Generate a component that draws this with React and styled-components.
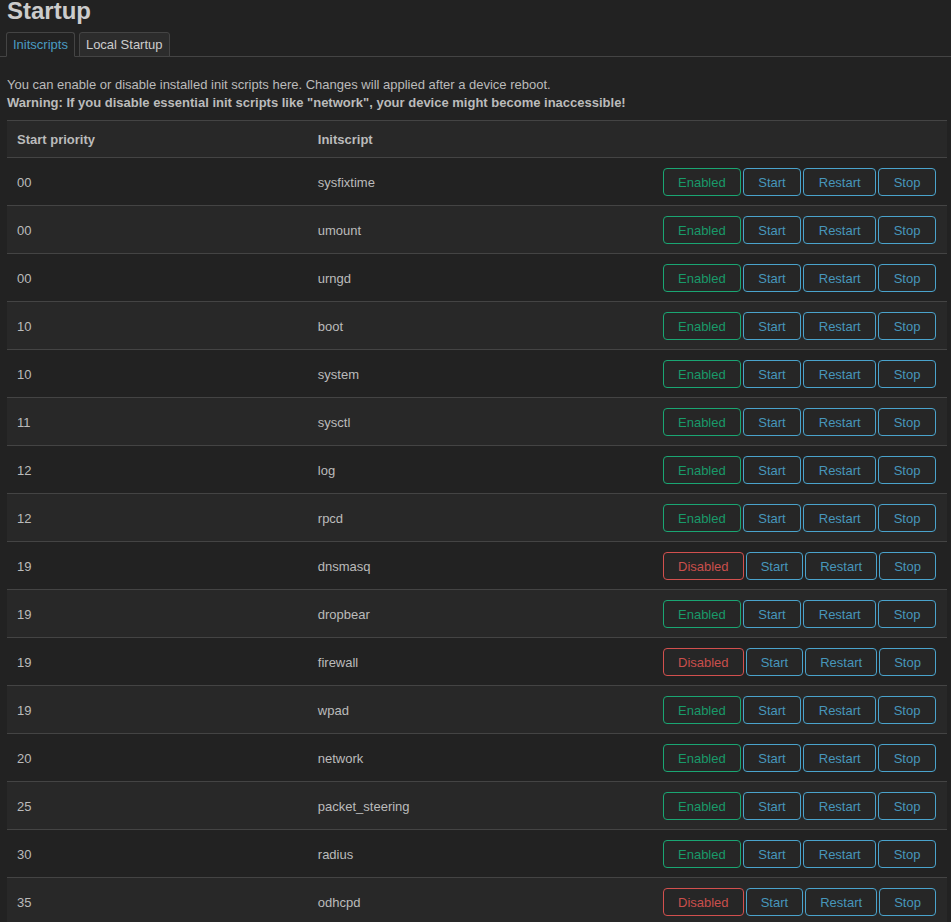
import React from "react";
import styled, { createGlobalStyle } from "styled-components";

const Global = createGlobalStyle`
  html, body { margin: 0; padding: 0; background: #222222; }
  body {
    font-family: "Liberation Sans", Arial, sans-serif;
    font-size: 13px;
    color: #bbbbbb;
    overflow: hidden;
  }
`;

const Page = styled.div`
  padding: 0 4px 0 7px;
  width: 940px;
  box-sizing: content-box;
`;

const Title = styled.h2`
  margin: -3px 0 0 0;
  font-size: 24px;
  font-weight: bold;
  line-height: 27px;
  color: #cccccc;
`;

const Tabs = styled.ul`
  display: flex;
  gap: 4px;
  list-style: none;
  margin: 8px -4px 0 -7px;
  padding: 0 0 0 6px;
  border-bottom: 1px solid #444444;
`;

const Tab = styled.li`
  margin-bottom: -1px;
  padding: 0 6px;
  line-height: 23px;
  border: 1px solid #444444;
  border-bottom-color: ${(p) => (p.$active ? "#222222" : "#444444")};
  border-radius: 3px 3px 0 0;
  background: ${(p) => (p.$active ? "#222222" : "#2c2c2c")};
  color: ${(p) => (p.$active ? "#4a9cc2" : "#cccccc")};
`;

const Desc = styled.div`
  margin-top: 19px;
  line-height: 18px;
`;

const Warn = styled.strong`
  display: block;
  font-weight: bold;
`;

const Table = styled.table`
  margin-top: 8px;
  width: 940px;
  border-collapse: collapse;
  border-top: 1px solid #444444;
  table-layout: fixed;
`;

const HeadRow = styled.tr`
  background: #282828;
  border-bottom: 1px solid #444444;
`;

const Th = styled.th`
  box-sizing: border-box;
  width: ${(p) => p.$w || "auto"};
  height: 37px;
  padding: 0 10px;
  text-align: left;
  font-weight: bold;
  color: #bbbbbb;
`;

const Row = styled.tr`
  background: ${(p) => (p.$alt ? "#282828" : "#222222")};
  border-bottom: 1px solid #444444;
`;

const Td = styled.td`
  box-sizing: border-box;
  height: 48px;
  padding: 1px 10px 0;
  color: #bbbbbb;
`;

const Actions = styled.div`
  display: flex;
  gap: 2px;
  width: 273px;
  margin-left: auto;
  margin-right: 1px;
`;

const tones = {
  green: { text: "#199a69", line: "#1aa673" },
  red: { text: "#c94f4c", line: "#d2504e" },
  blue: { text: "#4796bb", line: "#4aa3cc" },
};

const Btn = styled.button`
  flex: ${(p) => (p.$tone === "blue" ? "1 1 auto" : "0 0 auto")};
  height: 28px;
  padding: 0 14px;
  font-family: "Liberation Sans", Arial, sans-serif;
  font-size: 13px;
  background: #262626;
  color: ${(p) => tones[p.$tone].text};
  border: 1px solid ${(p) => tones[p.$tone].line};
  border-radius: 4px;
  cursor: pointer;
`;

const rows = [
  ["00", "sysfixtime", true],
  ["00", "umount", true],
  ["00", "urngd", true],
  ["10", "boot", true],
  ["10", "system", true],
  ["11", "sysctl", true],
  ["12", "log", true],
  ["12", "rpcd", true],
  ["19", "dnsmasq", false],
  ["19", "dropbear", true],
  ["19", "firewall", false],
  ["19", "wpad", true],
  ["20", "network", true],
  ["25", "packet_steering", true],
  ["30", "radius", true],
  ["35", "odhcpd", false],
];

export default function App() {
  return (
    <>
      <Global />
      <Page>
        <Title>Startup</Title>
        <Tabs>
          <Tab $active>Initscripts</Tab>
          <Tab>Local Startup</Tab>
        </Tabs>
        <Desc>
          You can enable or disable installed init scripts here. Changes will applied after a device reboot.
          <Warn>
            Warning: If you disable essential init scripts like "network", your device might become inaccessible!
          </Warn>
        </Desc>
        <Table>
          <thead>
            <HeadRow>
              <Th $w="32%">Start priority</Th>
              <Th $w="32%">Initscript</Th>
              <Th />
            </HeadRow>
          </thead>
          <tbody>
            {rows.map(([prio, name, enabled], i) => (
              <Row key={name} $alt={i % 2 === 1}>
                <Td>{prio}</Td>
                <Td>{name}</Td>
                <Td>
                  <Actions>
                    <Btn $tone={enabled ? "green" : "red"}>{enabled ? "Enabled" : "Disabled"}</Btn>
                    <Btn $tone="blue">Start</Btn>
                    <Btn $tone="blue">Restart</Btn>
                    <Btn $tone="blue">Stop</Btn>
                  </Actions>
                </Td>
              </Row>
            ))}
          </tbody>
        </Table>
      </Page>
    </>
  );
}
